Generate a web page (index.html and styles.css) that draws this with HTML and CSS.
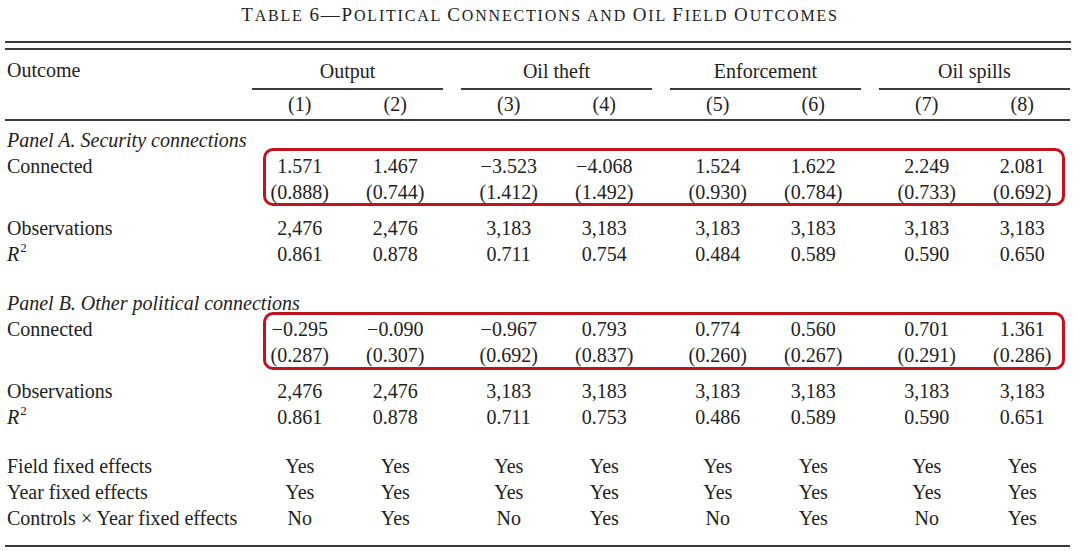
FILE: index.html
```html
<!DOCTYPE html>
<html lang="en">
<head>
<meta charset="utf-8">
<title>Table 6 — Political Connections and Oil Field Outcomes</title>
<link rel="stylesheet" href="styles.css">
</head>
<body>
<div class="page">
  <h1 class="title"><span class="big">T</span>able <span class="big">6—P</span>olitical <span class="big">C</span>onnections and <span class="big">O</span>il <span class="big">F</span>ield <span class="big">O</span>utcomes</h1>
  <div class="tablewrap">
    <div class="dbl-rule"></div>
    <table class="reg">
      <colgroup>
        <col class="c-label">
        <col class="c-num"><col class="c-num"><col class="c-sp">
        <col class="c-num"><col class="c-num"><col class="c-sp">
        <col class="c-num"><col class="c-num"><col class="c-sp">
        <col class="c-num"><col class="c-num">
      </colgroup>
      <thead>
        <tr class="grp">
          <th class="lbl">Outcome</th>
          <th class="g" colspan="2">Output</th><th class="sp"></th>
          <th class="g" colspan="2">Oil theft</th><th class="sp"></th>
          <th class="g" colspan="2">Enforcement</th><th class="sp"></th>
          <th class="g" colspan="2">Oil spills</th>
        </tr>
        <tr class="nums">
          <th class="lbl"></th>
          <th>(1)</th><th>(2)</th><th class="sp"></th>
          <th>(3)</th><th>(4)</th><th class="sp"></th>
          <th>(5)</th><th>(6)</th><th class="sp"></th>
          <th>(7)</th><th>(8)</th>
        </tr>
      </thead>
      <tbody class="panel panel-a">
        <tr class="phead"><td class="lbl" colspan="12"><i>Panel A. Security connections</i></td></tr>
        <tr class="coef">
          <td class="lbl">Connected</td>
          <td>1.571</td><td>1.467</td><td class="sp"></td>
          <td>−3.523</td><td>−4.068</td><td class="sp"></td>
          <td>1.524</td><td>1.622</td><td class="sp"></td>
          <td>2.249</td><td>2.081</td>
        </tr>
        <tr class="se">
          <td class="lbl"></td>
          <td>(0.888)</td><td>(0.744)</td><td class="sp"></td>
          <td>(1.412)</td><td>(1.492)</td><td class="sp"></td>
          <td>(0.930)</td><td>(0.784)</td><td class="sp"></td>
          <td>(0.733)</td><td>(0.692)</td>
        </tr>
        <tr class="obs">
          <td class="lbl">Observations</td>
          <td>2,476</td><td>2,476</td><td class="sp"></td>
          <td>3,183</td><td>3,183</td><td class="sp"></td>
          <td>3,183</td><td>3,183</td><td class="sp"></td>
          <td>3,183</td><td>3,183</td>
        </tr>
        <tr class="r2">
          <td class="lbl"><i>R</i><sup>2</sup></td>
          <td>0.861</td><td>0.878</td><td class="sp"></td>
          <td>0.711</td><td>0.754</td><td class="sp"></td>
          <td>0.484</td><td>0.589</td><td class="sp"></td>
          <td>0.590</td><td>0.650</td>
        </tr>
      </tbody>
      <tbody class="panel panel-b">
        <tr class="phead"><td class="lbl" colspan="12"><i>Panel B. Other political connections</i></td></tr>
        <tr class="coef">
          <td class="lbl">Connected</td>
          <td>−0.295</td><td>−0.090</td><td class="sp"></td>
          <td>−0.967</td><td>0.793</td><td class="sp"></td>
          <td>0.774</td><td>0.560</td><td class="sp"></td>
          <td>0.701</td><td>1.361</td>
        </tr>
        <tr class="se">
          <td class="lbl"></td>
          <td>(0.287)</td><td>(0.307)</td><td class="sp"></td>
          <td>(0.692)</td><td>(0.837)</td><td class="sp"></td>
          <td>(0.260)</td><td>(0.267)</td><td class="sp"></td>
          <td>(0.291)</td><td>(0.286)</td>
        </tr>
        <tr class="obs">
          <td class="lbl">Observations</td>
          <td>2,476</td><td>2,476</td><td class="sp"></td>
          <td>3,183</td><td>3,183</td><td class="sp"></td>
          <td>3,183</td><td>3,183</td><td class="sp"></td>
          <td>3,183</td><td>3,183</td>
        </tr>
        <tr class="r2">
          <td class="lbl"><i>R</i><sup>2</sup></td>
          <td>0.861</td><td>0.878</td><td class="sp"></td>
          <td>0.711</td><td>0.753</td><td class="sp"></td>
          <td>0.486</td><td>0.589</td><td class="sp"></td>
          <td>0.590</td><td>0.651</td>
        </tr>
      </tbody>
      <tbody class="fe">
        <tr class="fe-first">
          <td class="lbl">Field fixed effects</td>
          <td>Yes</td><td>Yes</td><td class="sp"></td>
          <td>Yes</td><td>Yes</td><td class="sp"></td>
          <td>Yes</td><td>Yes</td><td class="sp"></td>
          <td>Yes</td><td>Yes</td>
        </tr>
        <tr>
          <td class="lbl">Year fixed effects</td>
          <td>Yes</td><td>Yes</td><td class="sp"></td>
          <td>Yes</td><td>Yes</td><td class="sp"></td>
          <td>Yes</td><td>Yes</td><td class="sp"></td>
          <td>Yes</td><td>Yes</td>
        </tr>
        <tr class="fe-last">
          <td class="lbl">Controls × Year fixed effects</td>
          <td>No</td><td>Yes</td><td class="sp"></td>
          <td>No</td><td>Yes</td><td class="sp"></td>
          <td>No</td><td>Yes</td><td class="sp"></td>
          <td>No</td><td>Yes</td>
        </tr>
      </tbody>
    </table>
    <div class="hl hl-a"></div>
    <div class="hl hl-b"></div>
  </div>
</div>
</body>
</html>
```

FILE: styles.css
```css
html, body {
  margin: 0;
  padding: 0;
  background: #ffffff;
}

body {
  font-family: "Liberation Serif", "Times New Roman", serif;
  color: #222222;
}

.page {
  width: 1080px;
  height: 551px;
  overflow: hidden;
}

/* small-caps title: lowercase letters rendered as reduced capitals */
.title {
  margin: 5px 0 0 0;
  font-size: 16px;
  line-height: 20px;
  font-weight: normal;
  text-transform: uppercase;
  text-align: center;
  letter-spacing: 1.8px;
  color: #222222;
}

.title .big {
  font-size: 19px;
}

.tablewrap {
  position: relative;
  margin: 15px 9px 0 5px;
}

.dbl-rule {
  height: 5px;
  border-top: 2px solid #3c3c3c;
  border-bottom: 2px solid #3c3c3c;
}

.reg {
  border-collapse: collapse;
  table-layout: fixed;
  width: 1065px;
  font-size: 20px;
  line-height: 26px;
  margin-top: 7px;
}

.c-label { width: 247px; }
.c-num { width: 95.5px; }
.c-sp { width: 18px; }

.reg th,
.reg td {
  padding: 0;
  height: 26px;
  font-weight: normal;
  text-align: center;
  white-space: nowrap;
  vertical-align: middle;
}

.reg .lbl {
  text-align: left;
  padding-left: 2px;
}

.reg sup {
  font-size: 13px;
  line-height: 0;
  vertical-align: 9px;
  margin-left: 1px;
}

/* header */
.grp th.g {
  border-bottom: 2px solid #3c3c3c;
  padding-bottom: 4px;
}

.grp th.lbl,
.grp th.sp {
  padding-bottom: 6px;
}

.nums th {
  padding-top: 1px;
  padding-bottom: 2px;
  border-bottom: 2px solid #3c3c3c;
}

/* panels */
.panel-a .phead td {
  padding-top: 6px;
}

.panel-b .phead td {
  padding-top: 23px;
}

.se td {
  padding-bottom: 10px;
}

.fe-first td {
  padding-top: 23px;
}

.fe-last td {
  padding-bottom: 14px;
  border-bottom: 2px solid #3c3c3c;
}

/* highlight boxes drawn over the coefficient rows */
.hl {
  position: absolute;
  left: 258px;
  width: 802px;
  height: 58px;
  box-sizing: border-box;
  border: 3px solid #c2121f;
  border-radius: 10px;
  pointer-events: none;
}

.hl-a { top: 107px; }
.hl-b { top: 271px; }
```
